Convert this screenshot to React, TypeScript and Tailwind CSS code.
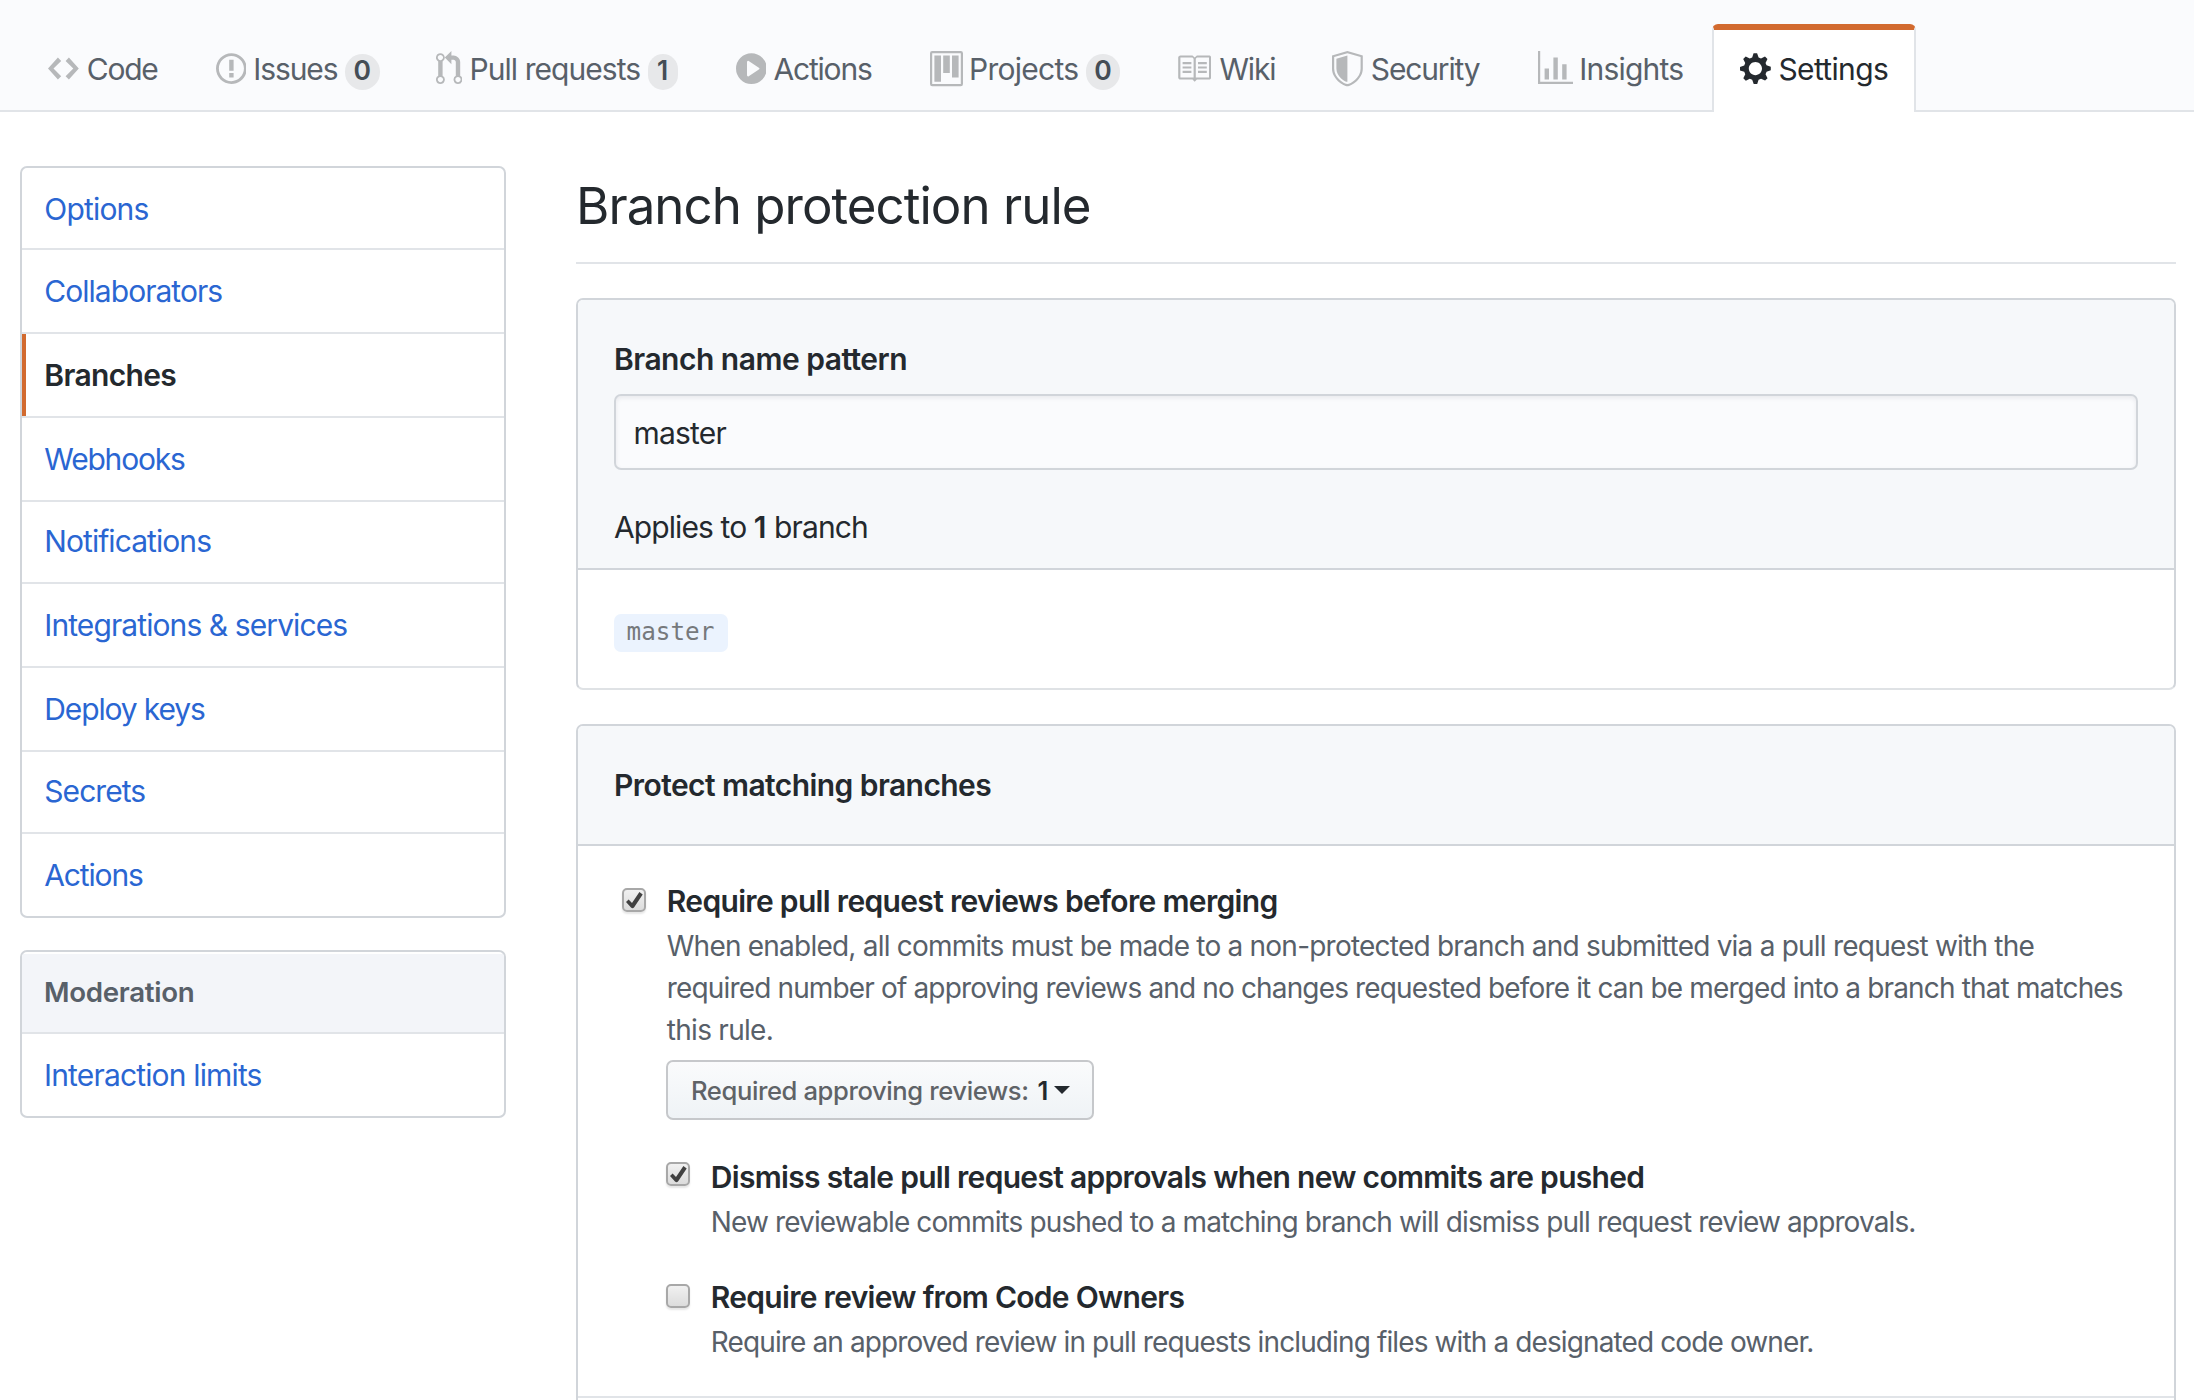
import type { ReactNode } from "react";

type IconName = "code" | "issue" | "pr" | "play" | "project" | "book" | "shield" | "graph" | "gear";

const icons: Record<IconName, { w: number; cls: string; d: string }> = {
  code: {
    w: 14,
    cls: "w-[30.8px]",
    d: "M9.5 3L8 4.5 11.5 8 8 11.5 9.5 13 14 8 9.5 3zm-5 0L0 8l4.5 5L6 11.5 2.5 8 6 4.5 4.5 3z",
  },
  issue: {
    w: 14,
    cls: "w-[30.8px]",
    d: "M7 2.3c3.14 0 5.7 2.56 5.7 5.7s-2.56 5.7-5.7 5.7A5.71 5.71 0 0 1 1.3 8c0-3.14 2.56-5.7 5.7-5.7zM7 1C3.14 1 0 4.14 0 8s3.14 7 7 7 7-3.14 7-7-3.14-7-7-7zm1 3H6v5h2V4zm0 6H6v2h2v-2z",
  },
  pr: {
    w: 12,
    cls: "w-[26.4px]",
    d: "M11 11.28V5c-.03-.78-.34-1.47-.94-2.06C9.46 2.35 8.78 2.03 8 2H7V0L4 3l3 3V4h1c.27.02.48.11.69.31.21.2.3.42.31.69v6.28A1.993 1.993 0 0 0 10 15a1.993 1.993 0 0 0 1-3.72zm-1 2.92c-.66 0-1.2-.55-1.2-1.2 0-.65.55-1.2 1.2-1.2.65 0 1.2.55 1.2 1.2 0 .65-.55 1.2-1.2 1.2zM4 3c0-1.11-.89-2-2-2a1.993 1.993 0 0 0-1 3.72v6.56A1.993 1.993 0 0 0 2 15a1.993 1.993 0 0 0 1-3.72V4.72c.59-.34 1-.98 1-1.72zm-.8 10c0 .66-.55 1.2-1.2 1.2-.65 0-1.2-.55-1.2-1.2 0-.65.55-1.2 1.2-1.2.65 0 1.2.55 1.2 1.2zM2 4.2C1.34 4.2.8 3.65.8 3c0-.65.55-1.2 1.2-1.2.65 0 1.2.55 1.2 1.2 0 .65-.55 1.2-1.2 1.2z",
  },
  play: {
    w: 14,
    cls: "w-[30.8px]",
    d: "M14 8A7 7 0 1 1 0 8a7 7 0 0 1 14 0zm-8.223 3.482l4.599-3.066a.5.5 0 0 0 0-.832L5.777 4.518A.5.5 0 0 0 5 4.934v6.132a.5.5 0 0 0 .777.416z",
  },
  project: {
    w: 15,
    cls: "w-[33px]",
    d: "M10 12h3V2h-3v10zm-4-2h3V2H6v8zm-4 4h3V2H2v12zm-1 1h13V1H1v14zM14 0H1a1 1 0 0 0-1 1v14a1 1 0 0 0 1 1h13a1 1 0 0 0 1-1V1a1 1 0 0 0-1-1z",
  },
  book: {
    w: 16,
    cls: "w-[35.2px]",
    d: "M3 5h4v1H3V5zm0 3h4V7H3v1zm0 2h4V9H3v1zm11-5h-4v1h4V5zm0 2h-4v1h4V7zm0 2h-4v1h4V9zm2-6v9c0 .55-.45 1-1 1H9.5l-1 1-1-1H2c-.55 0-1-.45-1-1V3c0-.55.45-1 1-1h5.5l1 1 1-1H15c.55 0 1 .45 1 1zm-8 .5L7.5 3H2v9h6V3.5zm7-.5H9.5l-.5.5V12h6V3z",
  },
  shield: {
    w: 14,
    cls: "w-[30.8px]",
    d: "M0 2l7-2 7 2v6.02C14 12.69 8.69 16 7 16c-1.69 0-7-3.31-7-7.98V2zm1 .75L7 1l6 1.75v5.268C13 12.104 8.449 15 7 15c-1.449 0-6-2.896-6-6.982V2.75zm1 .75L7 2v12c-1.207 0-5-2.482-5-5.985V3.5z",
  },
  graph: {
    w: 16,
    cls: "w-[35.2px]",
    d: "M16 14v1H0V0h1v14h15zM5 13H3V8h2v5zm4 0H7V3h2v10zm4 0h-2V6h2v7z",
  },
  gear: {
    w: 14,
    cls: "w-[30.8px]",
    d: "M14 8.77v-1.6l-1.94-.64-.45-1.09.88-1.84-1.13-1.13-1.81.91-1.09-.45-.69-1.92h-1.6l-.63 1.94-1.11.45-1.84-.88-1.13 1.13.91 1.81-.45 1.09L0 7.23v1.59l1.94.64.45 1.09-.88 1.84 1.13 1.13 1.81-.91 1.09.45.69 1.92h1.59l.63-1.94 1.11-.45 1.84.88 1.13-1.13-.92-1.81.47-1.09L14 8.75v.02zM7 11c-1.66 0-3-1.34-3-3s1.34-3 3-3 3 1.34 3 3-1.34 3-3 3z",
  },
};

function Icon({ name, className }: { name: IconName; className: string }) {
  const { w, cls, d } = icons[name];
  return (
    <svg viewBox={`0 0 ${w} 16`} className={`h-[35.2px] shrink-0 ${cls} ${className}`} fill="currentColor">
      <path fillRule={name === "pr" ? "nonzero" : "evenodd"} d={d} />
    </svg>
  );
}

const tabs: { icon: IconName; label: string; item: string; text: string; count?: string; badge?: string }[] = [
  { icon: "code", label: "Code", item: "w-[167.5px]", text: "ml-[7.9px] tracking-[-1.2px]" },
  { icon: "issue", label: "Issues", item: "w-[220px]", text: "ml-[7px] tracking-[-1.1px]", count: "0", badge: "ml-[7.2px] w-[35px]" },
  { icon: "pr", label: "Pull requests", item: "w-[300px]", text: "ml-[7.6px] tracking-[-0.94px]", count: "1", badge: "ml-[7.4px] w-[30px]" },
  { icon: "play", label: "Actions", item: "w-[194px]", text: "ml-[7.2px] tracking-[-1.2px]" },
  { icon: "project", label: "Projects", item: "w-[246.3px]", text: "ml-[6.6px] tracking-[-0.75px]", count: "0", badge: "ml-[7.6px] w-[34px]" },
  { icon: "book", label: "Wiki", item: "w-[156.2px]", text: "ml-[8.5px] tracking-[-1.2px]" },
  { icon: "shield", label: "Security", item: "w-[206px]", text: "ml-[8px] tracking-[-1.15px]" },
  { icon: "graph", label: "Insights", item: "w-[174px]", text: "ml-[6.1px] tracking-[-0.8px]" },
];

function TopNav() {
  return (
    <nav className="flex h-[112px] items-end border-b-2 border-[#e1e4e8] bg-[#fafbfd] pl-12 text-[30px] leading-10 text-[#586069]">
      {tabs.map((t) => (
        <a key={t.label} className={`-mb-0.5 flex h-[88px] shrink-0 items-center pt-0.5 ${t.item}`}>
          <Icon name={t.icon} className="text-[#b6b8ba]" />
          <span className={`whitespace-nowrap ${t.text}`}>{t.label}</span>
          {t.count && (
            <span
              className={`mt-[5px] flex h-9 items-center justify-center rounded-full bg-[#e7e8ea] pb-[3px] text-[26.5px] font-semibold text-[#444d56] ${t.badge}`}
            >
              {t.count}
            </span>
          )}
        </a>
      ))}
      <a className="-mb-0.5 flex h-[88px] w-[204px] shrink-0 items-center rounded-t-[6px] border-x-2 border-t-[6px] border-[#e1e4e8] border-t-[#d26a2f] bg-white pb-1 pl-[26px] text-[#24292e]">
        <Icon name="gear" className="text-[#24292e]" />
        <span className="ml-[7.7px] tracking-[-0.65px]">Settings</span>
      </a>
    </nav>
  );
}

const menu = [
  { label: "Options", cls: "h-[82px] pt-[2px] tracking-[-0.82px]" },
  { label: "Collaborators", cls: "h-[84px] tracking-[-0.97px]" },
  { label: "Branches", cls: "h-[84px] tracking-[-0.65px]", active: true },
  { label: "Webhooks", cls: "h-[84px] tracking-[-1.2px]" },
  { label: "Notifications", cls: "h-[82px] pb-[2px] tracking-[-0.94px]" },
  { label: "Integrations & services", cls: "h-[84px] tracking-[-0.91px]" },
  { label: "Deploy keys", cls: "h-[84px] tracking-[-1.14px]" },
  { label: "Secrets", cls: "h-[82px] pb-[2px] tracking-[-0.95px]" },
  { label: "Actions", cls: "h-[82px] tracking-[-1.15px]" },
];

function Sidebar() {
  return (
    <aside className="w-[486px] shrink-0 text-[30px] leading-10">
      <div className="overflow-hidden rounded-[7px] border-2 border-[#d1d5da]">
        {menu.map((m) => (
          <a
            key={m.label}
            className={`relative flex items-center border-b-2 border-[#e1e4e8] pl-[22.3px] last:border-b-0 ${m.cls} ${
              m.active ? "font-semibold text-[#24292e]" : "text-[#2a66d2]"
            }`}
          >
            {m.active && <span className="absolute inset-y-0 left-0 w-1 bg-[#d26a2f]" />}
            {m.label}
          </a>
        ))}
      </div>
      <div className="mt-8 overflow-hidden rounded-[7px] border-2 border-[#d1d5da] pt-0.5">
        <div className="flex h-20 items-center border-b-2 border-[#e1e4e8] bg-[#f3f5f9] pb-[3px] pl-[22px] text-[27.7px] font-semibold tracking-[-0.32px] text-[#586069]">
          Moderation
        </div>
        <a className="flex h-[82px] items-center pl-[22px] tracking-[-0.84px] text-[#2a66d2]">Interaction limits</a>
      </div>
    </aside>
  );
}

function Checkbox({ checked, className }: { checked?: boolean; className: string }) {
  return (
    <span
      className={`h-6 w-6 shrink-0 rounded-[5px] border-2 border-[#a8a8a8] bg-linear-to-b from-[#f1f1f1] to-[#dcdcdc] shadow-[0_2px_2px_rgba(0,0,0,0.1)] ${className}`}
    >
      {checked && (
        <svg viewBox="2 2 20 20" className="h-5 w-5">
          <path d="M4 14L6.6 11.6L10 15L17.4 4L20.7 6.5L12 19.4Q10.5 21 9 19.4Z" fill="#414141" />
        </svg>
      )}
    </span>
  );
}

function Option({
  title,
  titleClass,
  checked,
  boxClass,
  className,
  children,
}: {
  title: string;
  titleClass: string;
  checked?: boolean;
  boxClass: string;
  className: string;
  children: ReactNode;
}) {
  return (
    <div className={`flex ${className}`}>
      <Checkbox checked={checked} className={boxClass} />
      <div className="ml-5">
        <div className={`pl-[0.8px] whitespace-nowrap text-[30px] font-semibold leading-[42px] ${titleClass}`}>{title}</div>
        {children}
      </div>
    </div>
  );
}

export default function App() {
  return (
    <div className="h-[1400px] w-full overflow-hidden bg-white font-['Inter',sans-serif] text-[#24292e]">
      <TopNav />
      <div className="flex items-start pl-5 pt-[54px]">
        <Sidebar />
        <main className="ml-[70px] w-[1600px] shrink-0">
          <h1 className="h-[98px] border-b-2 border-[#e1e4e8] text-[51px] leading-[79px] tracking-[-0.96px]">
            Branch protection rule
          </h1>

          <section className="mt-[34px] overflow-hidden rounded-[7px] border-2 border-[#d1d5da] border-b-[#dfe2e5]">
            <div className="h-[270px] border-b-2 border-[#d1d5da] bg-[#f6f8fa] px-9 pt-[39px] text-[30px] leading-10">
              <div className="font-semibold tracking-[-0.51px]">Branch name pattern</div>
              <input
                className="mt-[15px] block h-[76px] w-full rounded-[7px] border-2 border-[#d1d5da] bg-[#fafbfd] pl-[17.5px] pt-[2px] tracking-[-0.8px] shadow-[inset_0_2px_4px_rgba(27,31,35,0.08)]"
                defaultValue="master"
              />
              <div className="mt-[37px] tracking-[-0.9px]">
                Applies to <strong className="font-semibold">1</strong>
                <span className="ml-px"> branch</span>
              </div>
            </div>
            <div className="flex h-[118px] items-start pl-9 pt-11">
              <span className="flex h-[38px] w-[114px] items-center justify-center rounded-[7px] bg-[#ebf3fe] pb-px pr-px font-['DejaVu_Sans_Mono',monospace] text-[24.3px] text-[#76797c]">
                master
              </span>
            </div>
          </section>

          <section className="mt-[34px] h-[700px] rounded-[7px] border-2 border-[#d1d5da]">
            <div className="flex h-[120px] items-center rounded-t-[5px] border-b-2 border-[#d1d5da] bg-[#f6f8fa] pl-9 text-[30px] font-semibold tracking-[-0.57px]">
              Protect matching branches
            </div>
            <div className="h-[552px] border-b-2 border-[#e1e4e8] pl-11 pt-[34px] text-[28px] leading-[42px] text-[#586069]">
              <Option
                title="Require pull request reviews before merging"
                titleClass="tracking-[-0.67px] text-[#24292e]"
                checked
                boxClass="mt-2"
                className=""
              >
                <p className="mt-[3px] whitespace-nowrap pl-[0.8px]">
                  <span className="tracking-[-0.78px]">
                    When enabled, all commits must be made to a non-protected branch and submitted via a pull request with the
                  </span>
                  <br />
                  <span className="tracking-[-0.85px]">
                    required number of approving reviews and no changes requested before it can be merged into a branch that matches
                  </span>
                  <br />
                  <span className="tracking-[-0.72px]">this rule.</span>
                </p>
                <button className="mt-[9px] flex h-[60px] w-[428px] items-center rounded-[7px] border-2 border-[#c6c8cb] bg-linear-to-b from-[#fafbfc] to-[#eff3f6] pl-[23px] pt-[2px] text-[25.6px] font-medium text-[#5f6367]">
                  <span className="tracking-[-0.4px]">Required approving reviews:</span>
                  <span className="ml-[4px] w-[21px] font-semibold text-[#24292e]">1</span>
                  <svg viewBox="0 0 16 8" className="-mt-[2px] h-2 w-4 text-[#24292e]" fill="currentColor">
                    <path d="M0 0h16L8 8z" />
                  </svg>
                </button>

                <Option
                  title="Dismiss stale pull request approvals when new commits are pushed"
                  titleClass="tracking-[-0.688px] text-[#24292e]"
                  checked
                  boxClass="mt-1.5"
                  className="mt-9"
                >
                  <p className="mt-[3px] whitespace-nowrap pl-[0.8px] tracking-[-0.875px]">
                    New reviewable commits pushed to a matching branch will dismiss pull request review approvals.
                  </p>
                </Option>
                <Option
                  title="Require review from Code Owners"
                  titleClass="tracking-[-0.7px] text-[#24292e]"
                  boxClass="mt-2"
                  className="mt-[33px]"
                >
                  <p className="mt-[3px] whitespace-nowrap pl-[0.8px] tracking-[-0.885px]">
                    Require an approved review in pull requests including files with a designated code owner.
                  </p>
                </Option>
              </Option>
            </div>
          </section>
        </main>
      </div>
    </div>
  );
}
